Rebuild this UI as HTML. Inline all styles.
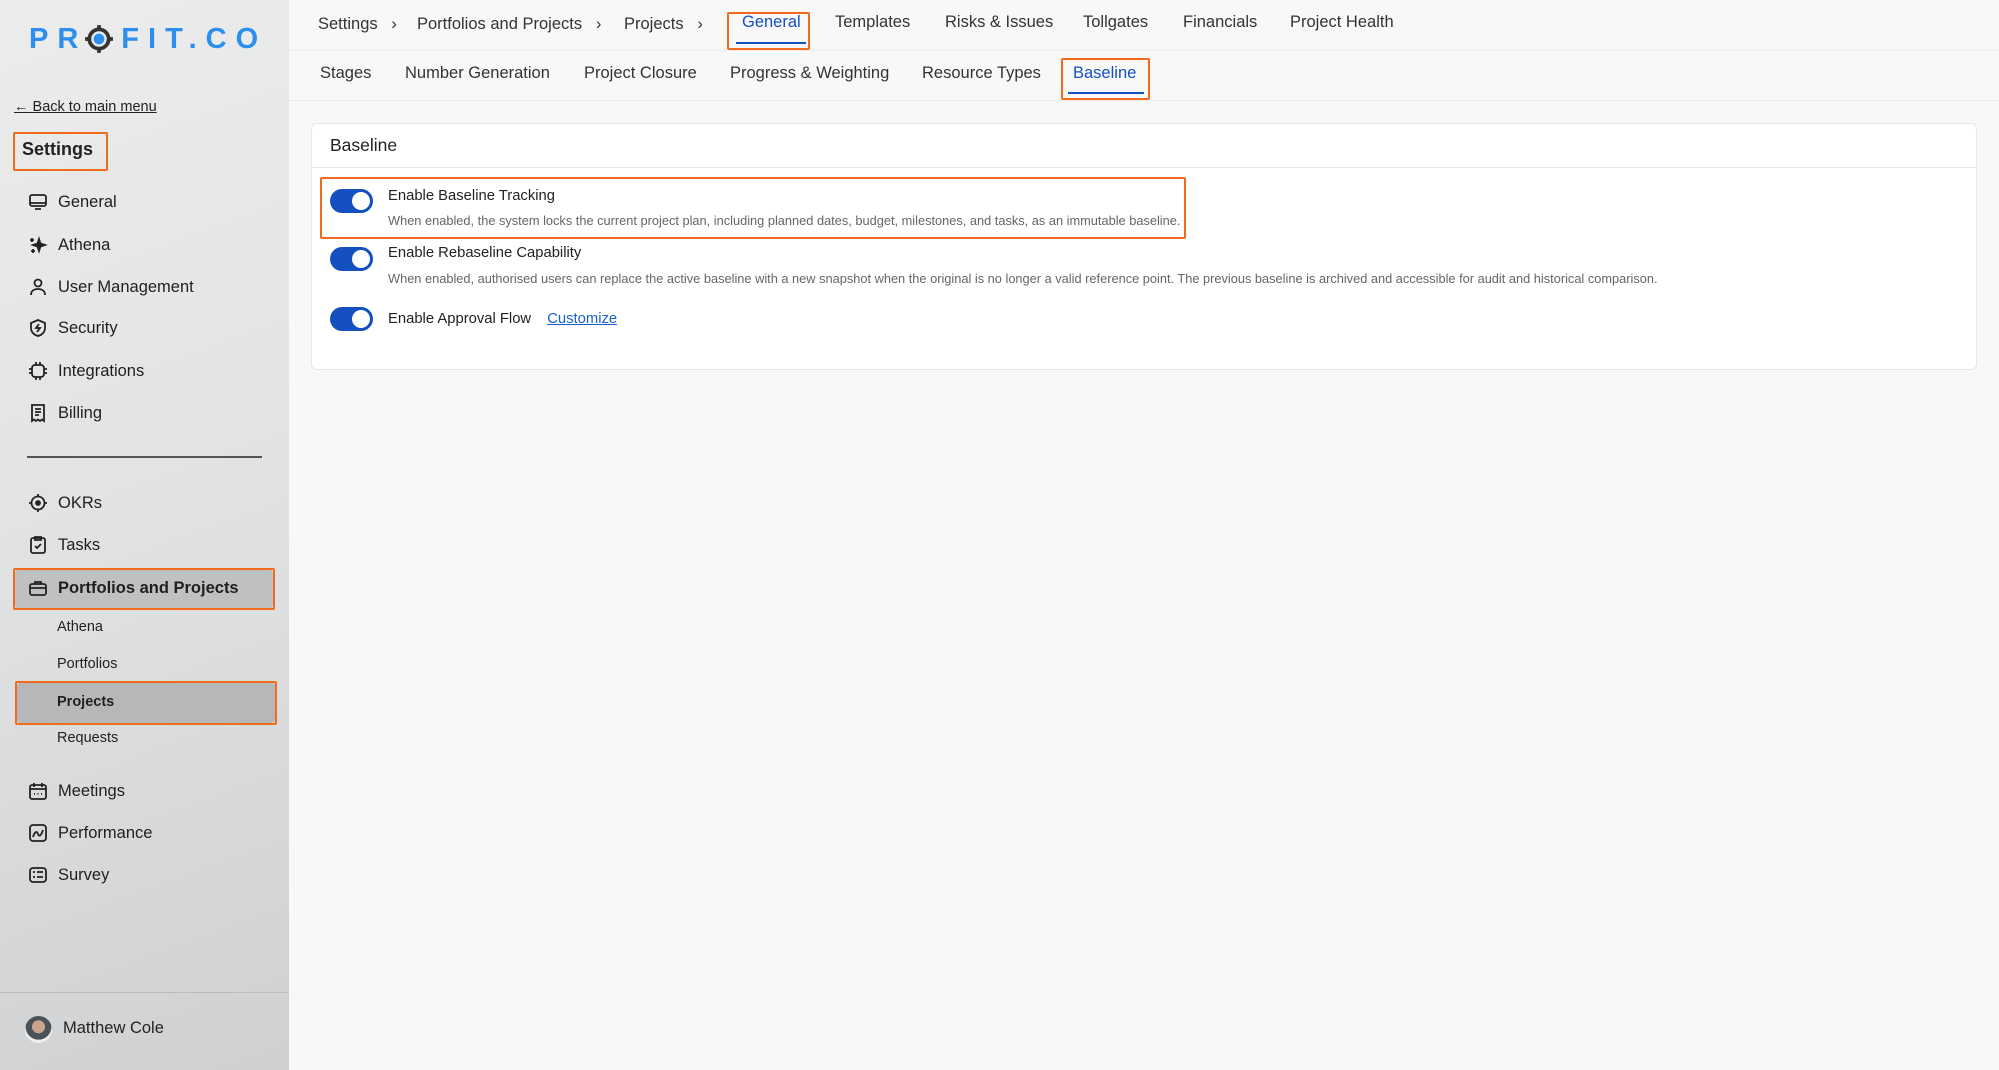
<!DOCTYPE html>
<html><head><meta charset="utf-8">
<style>
*{box-sizing:border-box;margin:0;padding:0}
body{width:1999px;height:1070px;overflow:hidden;font-family:"Liberation Sans",sans-serif;background:#f8f8f8;color:#222;position:relative}
.sb{position:absolute;left:0;top:0;width:289px;height:1070px;background:linear-gradient(160deg,#ececec 0%,#e2e3e4 45%,#cfd0d2 100%)}
.abs{position:absolute;white-space:nowrap}
.logo{left:29px;top:24px;font-size:29px;font-weight:bold;color:#2b8ff0;letter-spacing:9px;display:flex;align-items:center;line-height:29px}
.logo svg{width:30px;height:30px;margin:0 7px 0 -3px}
.back{left:14px;top:99px;font-size:14.5px;text-decoration:underline;color:#222}
.box{position:absolute;border:2.5px solid #f26b1d;border-radius:2px}
.item{position:absolute;left:28px;font-size:16.5px;color:#1f1f1f;display:flex;align-items:center;gap:0}
.item svg{width:20px;height:20px;margin-right:10px;fill:none;stroke:#222;stroke-width:1.8}
.sub{position:absolute;left:57px;font-size:14.5px;color:#222}
.tb{position:absolute;font-size:16.5px;color:#333;white-space:nowrap}
.card{position:absolute;left:311px;top:123px;width:1666px;height:247px;background:#fff;border:1px solid #e6e6e6;border-radius:6px}
.tg{position:absolute;left:330px;width:43px;height:24px;border-radius:12px;background:#1450c0}
.tg:after{content:"";position:absolute;right:3px;top:3px;width:18px;height:18px;border-radius:50%;background:#fff}
.tt{position:absolute;left:388px;font-size:14.8px;color:#222;white-space:nowrap}
.ds{position:absolute;left:388px;font-size:12.8px;color:#666;white-space:nowrap}
</style></head><body>
<div class="sb"></div>
<div class="abs logo">PR<svg viewBox="0 0 28 28"><circle cx="14" cy="14" r="9" fill="none" stroke="#333" stroke-width="3.5"/><circle cx="14" cy="14" r="5" fill="#2b8ff0"/><path d="M14 1v5M14 22v5M1 14h5M22 14h5" stroke="#333" stroke-width="3.5"/></svg>FIT.CO</div>
<div class="abs back">← Back to main menu</div>
<div class="box" style="left:13px;top:132px;width:95px;height:39px"></div>
<div class="abs" style="left:22px;top:139px;font-size:18px;font-weight:bold">Settings</div>

<div class="item" style="top:192px"><svg viewBox="0 0 20 20"><rect x="2" y="3" width="16" height="11" rx="2"/><path d="M2 11h16M7 17h6"/></svg>General</div>
<div class="item" style="top:235px"><svg viewBox="0 0 20 20"><path d="M11 4l1.5 4.5L17 10l-4.5 1.5L11 16l-1.5-4.5L5 10l4.5-1.5z" fill="#222"/><path d="M4 3v4M2 5h4M5 14v4M3 16h4"/></svg>Athena</div>
<div class="item" style="top:277px"><svg viewBox="0 0 20 20"><circle cx="10" cy="6" r="3.5"/><path d="M3 18c0-4 3-6 7-6s7 2 7 6"/></svg>User Management</div>
<div class="item" style="top:318px"><svg viewBox="0 0 20 20"><path d="M10 2l7 3v5c0 4-3 7-7 8-4-1-7-4-7-8V5z"/><path d="M11 6l-3 4h4l-3 4"/></svg>Security</div>
<div class="item" style="top:361px"><svg viewBox="0 0 20 20"><rect x="4" y="4" width="12" height="12" rx="3"/><path d="M8 1v3M12 1v3M8 16v3M12 16v3M1 8h3M1 12h3M16 8h3M16 12h3"/></svg>Integrations</div>
<div class="item" style="top:403px"><svg viewBox="0 0 20 20"><path d="M4 2h12v16l-2-1.5-2 1.5-2-1.5-2 1.5-2-1.5L4 18z"/><path d="M7 6h6M7 9h6M7 12h4"/></svg>Billing</div>
<div style="position:absolute;left:27px;top:456px;width:235px;height:1.5px;background:#555"></div>
<div class="item" style="top:493px"><svg viewBox="0 0 20 20"><circle cx="10" cy="10" r="6.5"/><circle cx="10" cy="10" r="2" fill="#222"/><path d="M10 1v2.5M10 16.5V19M1 10h2.5M16.5 10H19"/></svg>OKRs</div>
<div class="item" style="top:535px"><svg viewBox="0 0 20 20"><rect x="3" y="3" width="14" height="15" rx="2"/><path d="M7 2h6v3H7zM7 11l2 2 4-4"/></svg>Tasks</div>
<div style="position:absolute;left:15px;top:570px;width:258px;height:38px;background:#bfc0c2;border-radius:3px"></div>
<div class="box" style="left:13px;top:568px;width:262px;height:42px"></div>
<div class="item" style="top:578px;font-weight:bold"><svg viewBox="0 0 20 20"><rect x="2" y="6" width="16" height="11" rx="2"/><path d="M7 6V4h6v2M2 10h16"/></svg>Portfolios and Projects</div>
<div class="sub" style="top:619px">Athena</div>
<div class="sub" style="top:656px">Portfolios</div>
<div style="position:absolute;left:17px;top:683px;width:258px;height:40px;background:#b6b7b9;border-radius:3px"></div>
<div class="box" style="left:15px;top:681px;width:262px;height:44px"></div>
<div class="sub" style="top:694px;font-weight:bold">Projects</div>
<div class="sub" style="top:730px">Requests</div>
<div class="item" style="top:781px"><svg viewBox="0 0 20 20"><rect x="2" y="4" width="16" height="14" rx="2"/><path d="M2 8h16M6 2v4M14 2v4M6 13h1M9.5 13h1M13 13h1"/></svg>Meetings</div>
<div class="item" style="top:823px"><svg viewBox="0 0 20 20"><rect x="2" y="2" width="16" height="16" rx="3"/><path d="M5 14c2-6 4-6 5-3s3 2 5-4"/></svg>Performance</div>
<div class="item" style="top:865px"><svg viewBox="0 0 20 20"><rect x="2" y="3" width="16" height="14" rx="3"/><path d="M5 7h2M5 12h2M9 7h6M9 12h6"/></svg>Survey</div>
<div style="position:absolute;left:0;top:992px;width:289px;height:1px;background:#bdbdbd"></div>
<div style="position:absolute;left:25px;top:1016px;width:27px;height:27px;border-radius:50%;background:radial-gradient(circle at 50% 40%,#c9a48c 0 30%,#4a5158 32% 60%,#eee 62%)"></div>
<div class="abs" style="left:63px;top:1019px;font-size:16.5px">Matthew Cole</div>

<div style="position:absolute;left:289px;top:50px;width:1710px;height:1px;background:#ececec"></div>
<div style="position:absolute;left:289px;top:100px;width:1710px;height:1px;background:#ececec"></div>
<div class="tb" style="left:318px;top:15px">Settings &nbsp;&nbsp;›</div>
<div class="tb" style="left:417px;top:15px">Portfolios and Projects &nbsp;&nbsp;›</div>
<div class="tb" style="left:624px;top:15px">Projects &nbsp;&nbsp;›</div>
<div class="box" style="left:727px;top:12px;width:83px;height:38px"></div>
<div class="tb" style="left:742px;top:13px;color:#1450c0">General</div>
<div style="position:absolute;left:736px;top:42px;width:70px;height:2px;background:#1450c0"></div>
<div class="tb" style="left:835px;top:13px">Templates</div>
<div class="tb" style="left:945px;top:13px">Risks &amp; Issues</div>
<div class="tb" style="left:1083px;top:13px">Tollgates</div>
<div class="tb" style="left:1183px;top:13px">Financials</div>
<div class="tb" style="left:1290px;top:13px">Project Health</div>

<div class="tb" style="left:320px;top:64px">Stages</div>
<div class="tb" style="left:405px;top:64px">Number Generation</div>
<div class="tb" style="left:584px;top:64px">Project Closure</div>
<div class="tb" style="left:730px;top:64px">Progress &amp; Weighting</div>
<div class="tb" style="left:922px;top:64px">Resource Types</div>
<div class="box" style="left:1061px;top:58px;width:89px;height:42px"></div>
<div class="tb" style="left:1073px;top:64px;color:#1450c0">Baseline</div>
<div style="position:absolute;left:1068px;top:92px;width:76px;height:2px;background:#1450c0"></div>

<div class="card"></div>
<div class="abs" style="left:330px;top:135px;font-size:17.5px;color:#222">Baseline</div>
<div style="position:absolute;left:312px;top:167px;width:1664px;height:1px;background:#e6e6e6"></div>
<div class="box" style="left:320px;top:177px;width:866px;height:62px"></div>
<div class="tg" style="top:189px"></div>
<div class="tt" style="top:188px">Enable Baseline Tracking</div>
<div class="ds" style="top:213px">When enabled, the system locks the current project plan, including planned dates, budget, milestones, and tasks, as an immutable baseline.</div>
<div class="tg" style="top:247px"></div>
<div class="tt" style="top:245px">Enable Rebaseline Capability</div>
<div class="ds" style="top:271px">When enabled, authorised users can replace the active baseline with a new snapshot when the original is no longer a valid reference point. The previous baseline is archived and accessible for audit and historical comparison.</div>
<div class="tg" style="top:307px"></div>
<div class="tt" style="top:311px">Enable Approval Flow <span style="color:#1a5fd0;text-decoration:underline;margin-left:12px">Customize</span></div>
</body></html>
